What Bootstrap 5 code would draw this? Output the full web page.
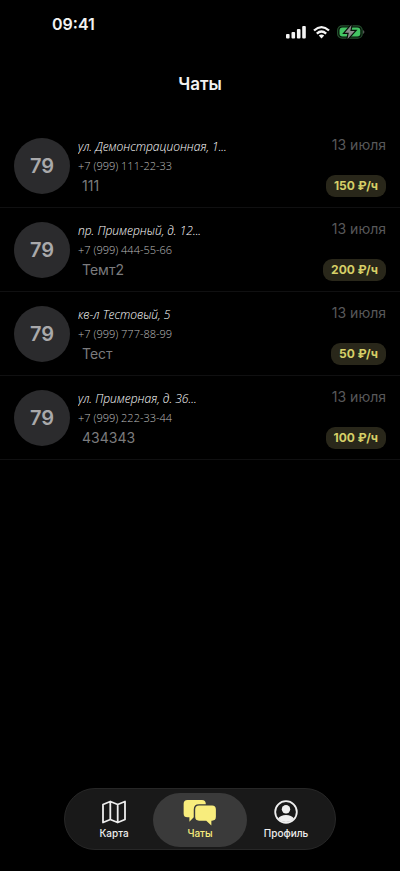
<!DOCTYPE html>
<html lang="ru">
<head>
<meta charset="utf-8">
<meta name="viewport" content="width=device-width, initial-scale=1">
<title>Чаты</title>
<link href="https://cdn.jsdelivr.net/npm/bootstrap@5.3.0/dist/css/bootstrap.min.css" rel="stylesheet">
<style>
body { background: #000; color: #f2f2f2; font-family: Inter, "Liberation Sans", sans-serif; }
.status-bar { height: 48px; padding: 14px 35px 0 52px; }
.clock { font-size: 16px; line-height: 20px; font-weight: 600; }
.status-icons { padding-top: 11px; gap: 7px; }
.page-title { font-size: 17px; line-height: 24px; font-weight: 600; padding: 24px 0 28px; }
.chat-row { height: 84px; padding: 0 14px; color: inherit; border-bottom: 1px solid #101011; }
.avatar { width: 56px; height: 56px; background: #2b2b2d; color: #a9a9ab; font-size: 20px; font-weight: 600; }
.chat-main { padding: 13px 0 0 8px; min-width: 0; }
.address { font-family: "Open Sans", "Noto Sans", sans-serif; font-style: italic; font-weight: 300; font-size: 12px; line-height: 20px; color: #fff; }
.phone { font-family: "Open Sans", "Noto Sans", sans-serif; font-weight: 300; font-size: 11px; line-height: 17px; color: #bcbcbc; }
.message { font-size: 14px; line-height: 24px; padding-left: 4px; color: #7b7b7d; }
.chat-side { padding: 11px 0 10px; }
.date { font-size: 14px; line-height: 20px; color: #58585a; }
.price { font-size: 12px; line-height: 16px; font-weight: 700; padding: 3px 8px; border-radius: 9px; background: #29271a; color: #d6cf67; }
.tab-wrap { padding: 0 64px 21px; }
.tab-bar { max-width: 272px; height: 62px; padding: 4px 10px; border: 1px solid #272727; background: #191919; }
.tab-item { flex: 1 1 0; height: 54px; font-size: 10px; line-height: 14px; font-weight: 500; color: #eee; padding: 0; border: 0; background: transparent; }
.tab-item.is-active { flex: 0 0 94px; background: #3a3a3a; color: #f8ed7d; }
</style>
</head>
<body>
<div class="d-flex flex-column min-vh-100">
  <header>
    <div class="status-bar d-flex justify-content-between align-items-start">
      <span class="clock">09:41</span>
      <span class="status-icons d-flex align-items-center">
        <svg width="20" height="14" viewBox="0 0 20 14" fill="#f4f4f4" aria-hidden="true"><rect x="0" y="9" width="3.600" height="4.500" rx="1"/><rect x="5.500" y="7" width="3.600" height="6.500" rx="1"/><rect x="10.900" y="4" width="3.600" height="9.500" rx="1"/><rect x="16.200" y="1" width="3.600" height="12.500" rx="1"/></svg>
        <svg width="17" height="14" viewBox="0 0 17 14" aria-hidden="true"><g fill="none" stroke="#f4f4f4" stroke-width="2.300"><path d="M1 5.500Q8.500-1.200 16 5.500"/><path d="M3.800 8.600Q8.500 4.400 13.200 8.600"/></g><path d="M5.800 10.500Q8.500 8.400 11.200 10.500L8.500 13.500Z" fill="#f4f4f4"/></svg>
        <svg width="28" height="14" viewBox="0 0 28 14" aria-hidden="true"><rect x=".6" y=".8" width="24.600" height="12.400" rx="4.500" fill="#071109" stroke="#24502e" stroke-width="1.200"/><rect x="2.500" y="2.600" width="20.800" height="8.800" rx="3" fill="#43c563"/><path d="M26.300 5v4q2-2 0-4" fill="#777"/><path d="M14.500 0 7.800 7.800h4L10.500 14l7.300-8h-4.500Z" fill="#8c8c8c" stroke="#071109" stroke-width="2.400" paint-order="stroke"/></svg>
      </span>
    </div>
    <h1 class="page-title text-center m-0">Чаты</h1>
  </header>
  <main class="flex-grow-1">
    <a href="#" class="chat-row d-flex text-decoration-none">
      <span class="avatar rounded-circle d-flex align-items-center justify-content-center flex-shrink-0 align-self-center">79</span>
      <span class="chat-main d-flex flex-column flex-grow-1"><span class="address text-truncate">ул. Демонстрационная, 1...</span><span class="phone">+7 (999) 111-22-33</span><span class="message">111</span></span>
      <span class="chat-side d-flex flex-column align-items-end justify-content-between flex-shrink-0"><span class="date">13 июля</span><span class="price">150 ₽/ч</span></span>
    </a>
    <a href="#" class="chat-row d-flex text-decoration-none">
      <span class="avatar rounded-circle d-flex align-items-center justify-content-center flex-shrink-0 align-self-center">79</span>
      <span class="chat-main d-flex flex-column flex-grow-1"><span class="address text-truncate">пр. Примерный, д. 12...</span><span class="phone">+7 (999) 444-55-66</span><span class="message">Темт2</span></span>
      <span class="chat-side d-flex flex-column align-items-end justify-content-between flex-shrink-0"><span class="date">13 июля</span><span class="price">200 ₽/ч</span></span>
    </a>
    <a href="#" class="chat-row d-flex text-decoration-none">
      <span class="avatar rounded-circle d-flex align-items-center justify-content-center flex-shrink-0 align-self-center">79</span>
      <span class="chat-main d-flex flex-column flex-grow-1"><span class="address text-truncate">кв-л Тестовый, 5</span><span class="phone">+7 (999) 777-88-99</span><span class="message">Тест</span></span>
      <span class="chat-side d-flex flex-column align-items-end justify-content-between flex-shrink-0"><span class="date">13 июля</span><span class="price">50 ₽/ч</span></span>
    </a>
    <a href="#" class="chat-row d-flex text-decoration-none">
      <span class="avatar rounded-circle d-flex align-items-center justify-content-center flex-shrink-0 align-self-center">79</span>
      <span class="chat-main d-flex flex-column flex-grow-1"><span class="address text-truncate">ул. Примерная, д. 36...</span><span class="phone">+7 (999) 222-33-44</span><span class="message">434343</span></span>
      <span class="chat-side d-flex flex-column align-items-end justify-content-between flex-shrink-0"><span class="date">13 июля</span><span class="price">100 ₽/ч</span></span>
    </a>
  </main>
  <footer class="tab-wrap">
    <nav class="tab-bar d-flex rounded-pill mx-auto" aria-label="Разделы">
      <button type="button" class="tab-item rounded-pill d-flex flex-column align-items-center justify-content-center">
        <svg width="26" height="26" viewBox="0 0 26 26" fill="none" stroke="currentColor" stroke-width="1.800" stroke-linejoin="round" aria-hidden="true"><path d="M2 4.500 9.300 1.500 16.700 4.500 24 1.500V19.500L16.700 22.500 9.300 19.500 2 22.500ZM9.300 1.500V19.500M16.700 4.500V22.500"/></svg>
        Карта</button>
      <button type="button" class="tab-item is-active rounded-pill d-flex flex-column align-items-center justify-content-center" aria-current="page">
        <svg width="34" height="26" viewBox="0 0 34 27" fill="currentColor" aria-hidden="true"><path d="M4 0H19Q23 0 23 4V4.500H16Q10.500 4.500 10.500 10V18L6 22.500V18H4Q0 18 0 14V4Q0 0 4 0Z"/><path d="M16 5.800H29.500Q33.500 5.800 33.500 9.800V17.500Q33.500 21.500 29.500 21.500H28.800V26.500L23.500 21.500H16Q12 21.500 12 17.500V9.800Q12 5.800 16 5.800Z"/></svg>
        Чаты</button>
      <button type="button" class="tab-item rounded-pill d-flex flex-column align-items-center justify-content-center">
        <svg width="26" height="26" viewBox="0 0 26 26" aria-hidden="true"><circle cx="13" cy="12" r="10.800" fill="none" stroke="currentColor" stroke-width="1.800"/><circle cx="13" cy="9.300" r="4.200" fill="currentColor"/><path d="M5 18.500Q7.500 15 13 15T21 18.500Q18 22 13 22T5 18.500Z" fill="currentColor"/></svg>
        Профиль</button>
    </nav>
  </footer>
</div>
<script src="https://cdn.jsdelivr.net/npm/bootstrap@5.3.0/dist/js/bootstrap.bundle.min.js"></script>
</body>
</html>
